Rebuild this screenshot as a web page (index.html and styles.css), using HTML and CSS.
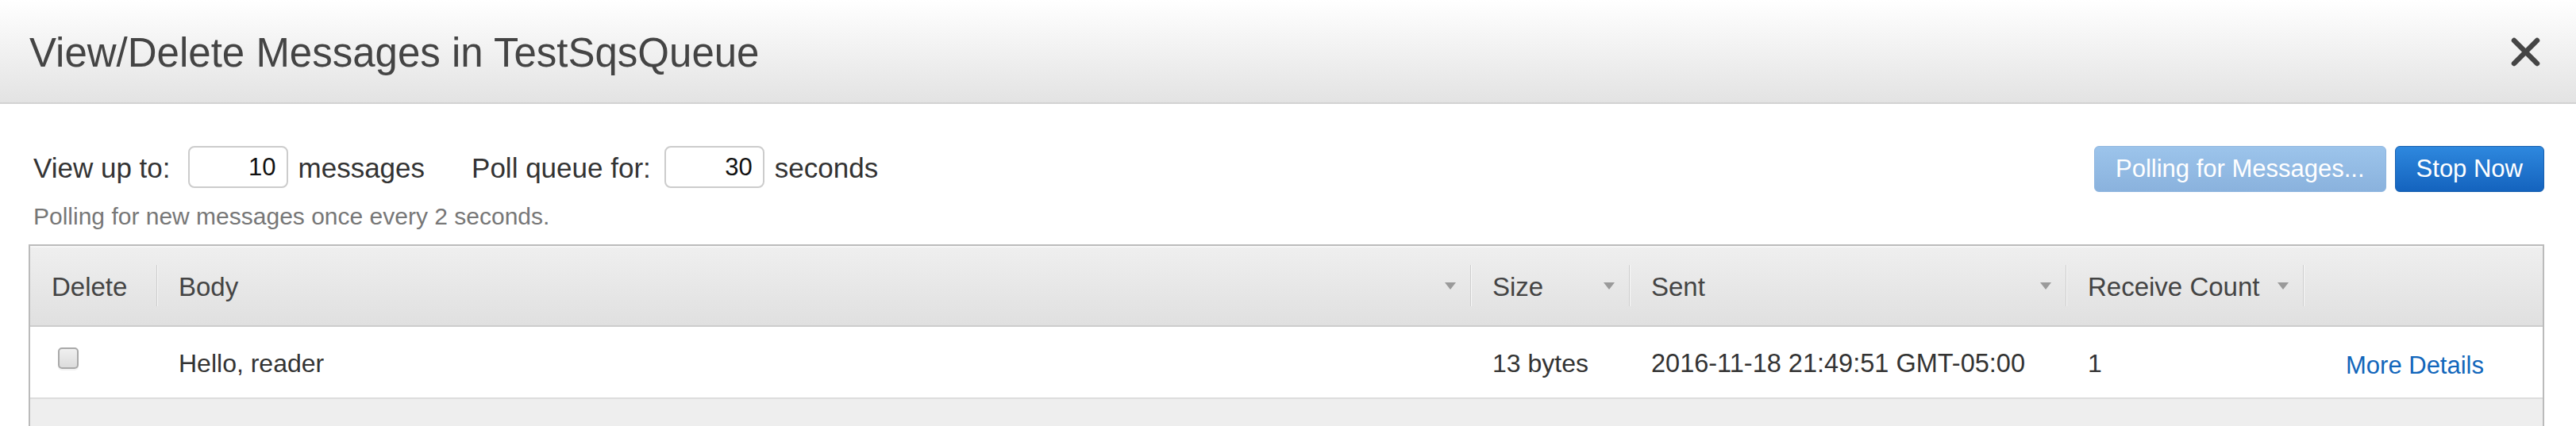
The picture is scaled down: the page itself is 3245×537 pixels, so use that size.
FILE: index.html
```html
<!DOCTYPE html>
<html>
<head>
<meta charset="utf-8">
<link rel="stylesheet" href="styles.css">
</head>
<body>
<div class="modal">
  <div class="modal-header">
    <h1 class="title">View/Delete Messages in TestSqsQueue</h1>
    <button class="close" aria-label="Close">
      <svg width="37" height="37" viewBox="0 0 37 37"><path d="M4 4 L33 33 M33 4 L4 33" stroke="#454545" stroke-width="6.5" stroke-linecap="round" fill="none"/></svg>
    </button>
  </div>
  <div class="toolbar">
    <div class="opts">
      <div class="fields">
        <span class="lbl">View up to:</span>
        <input class="num" type="text" value="10">
        <span class="lbl unit">messages</span>
        <span class="lbl poll">Poll queue for:</span>
        <input class="num" type="text" value="30">
        <span class="lbl unit">seconds</span>
      </div>
      <div class="hint">Polling for new messages once every 2 seconds.</div>
    </div>
    <div class="actions">
      <button class="btn btn-disabled">Polling for Messages...</button>
      <button class="btn btn-primary">Stop Now</button>
    </div>
  </div>
  <div class="grid">
    <div class="thead">
      <div class="th"><div class="hc">Delete</div></div>
      <div class="th"><div class="hc">Body<span class="sort"></span></div></div>
      <div class="th"><div class="hc">Size<span class="sort"></span></div></div>
      <div class="th"><div class="hc">Sent<span class="sort"></span></div></div>
      <div class="th"><div class="hc">Receive Count<span class="sort"></span></div></div>
      <div class="th"></div>
    </div>
    <div class="trow">
      <div class="td td-cb"><input class="cb" type="checkbox"></div>
      <div class="td">Hello, reader</div>
      <div class="td">13 bytes</div>
      <div class="td td-date">2016-11-18 21:49:51 GMT-05:00</div>
      <div class="td">1</div>
      <div class="td td-link"><a class="link" href="#">More Details</a></div>
    </div>
    <div class="tfoot"></div>
  </div>
</div>
</body>
</html>
```
FILE: styles.css
```css
html, body {
  margin: 0;
  padding: 0;
  background: #ffffff;
}
body {
  font-family: "Liberation Sans", Arial, sans-serif;
  color: #333333;
}
.modal-header {
  height: 129px;
  border-bottom: 2px solid #d2d2d2;
  background: linear-gradient(to bottom, #ffffff 0%, #e3e3e3 100%);
  display: flex;
  align-items: center;
  justify-content: space-between;
  padding: 0 45px 0 37px;
}
.title {
  margin: 4px 0 0 0;
  font-size: 51px;
  font-weight: normal;
  color: #444444;
}
.close {
  border: 0;
  background: none;
  padding: 0;
  width: 37px;
  height: 37px;
  display: flex;
  margin-top: 2px;
}
.toolbar {
  display: flex;
  justify-content: space-between;
  align-items: flex-start;
  padding: 53px 40px 0 42px;
}
.fields {
  display: flex;
  align-items: center;
  height: 53px;
}
.lbl {
  font-size: 35px;
  color: #333333;
  padding-top: 2px;
}
.num {
  box-sizing: border-box;
  width: 126px;
  height: 53px;
  border: 2px solid #cccccc;
  border-radius: 8px;
  font-family: "Liberation Sans", Arial, sans-serif;
  font-size: 31px;
  color: #111111;
  text-align: right;
  padding: 0 13px 0 8px;
  margin: 0 13px 0 22px;
  outline: none;
}
.poll {
  margin-left: 59px;
}
.poll + .num {
  margin-left: 17px;
}
.hint {
  margin-top: 19px;
  font-size: 30px;
  line-height: 34px;
  color: #777777;
}
.actions {
  display: flex;
  gap: 11px;
}
.btn {
  box-sizing: border-box;
  height: 58px;
  padding: 0 26px;
  border-radius: 6px;
  font-family: "Liberation Sans", Arial, sans-serif;
  font-size: 31px;
  color: #ffffff;
  cursor: pointer;
}
.btn-disabled {
  border: 1px solid #8fb6df;
  background: linear-gradient(to bottom, #9cc4eb 0%, #8ab2dd 100%);
}
.btn-primary {
  border: 1px solid #165fb0;
  background: linear-gradient(to bottom, #2e88de 0%, #1463be 100%);
}
.grid {
  margin: 18px 40px 0 36px;
  border: 2px solid #bbbbbb;
  border-bottom: 0;
}
.thead, .trow {
  display: grid;
  grid-template-columns: 160px 1655px 200px 550px 299px 1fr;
}
.thead {
  height: 100px;
  border-bottom: 2px solid #cccccc;
  background: linear-gradient(to bottom, #efefef 0%, #e0e0e0 100%);
  box-shadow: inset 0 2px 0 #f6f6f6;
}
.th {
  display: flex;
  align-items: center;
}
.hc {
  flex: 1;
  height: 49px;
  display: flex;
  align-items: center;
  justify-content: space-between;
  padding: 3px 18px 0 27px;
  border-right: 1px solid #cdcdcd;
  box-shadow: 1px 0 0 #f8f8f8;
  font-size: 33px;
  color: #444444;
}
.sort {
  width: 0;
  height: 0;
  border-left: 7px solid transparent;
  border-right: 7px solid transparent;
  border-top: 9px solid #9a9a9a;
  margin-left: 20px;
  margin-top: -3px;
}
.trow {
  height: 89px;
  border-bottom: 2px solid #dddddd;
  background: #ffffff;
}
.td {
  display: flex;
  align-items: center;
  padding-left: 27px;
  padding-top: 3px;
  font-size: 32px;
  color: #333333;
}
.td-date {
  font-size: 32.5px;
}
.td-cb {
  padding-left: 35px;
  padding-top: 0;
  padding-bottom: 10px;
}
.cb {
  appearance: none;
  -webkit-appearance: none;
  margin: 0;
  width: 26px;
  height: 27px;
  box-sizing: border-box;
  border: 2px solid #a9a9a9;
  border-radius: 5px;
  background: linear-gradient(to bottom, #f0f0f0 0%, #dcdcdc 100%);
  box-shadow: 0 2px 1px rgba(0, 0, 0, 0.06);
}
.td-link {
  padding-left: 53px;
  padding-top: 9px;
}
.link {
  font-size: 31px;
  color: #1166bb;
  text-decoration: none;
}
.tfoot {
  height: 40px;
  background: #eeeeee;
}
```
